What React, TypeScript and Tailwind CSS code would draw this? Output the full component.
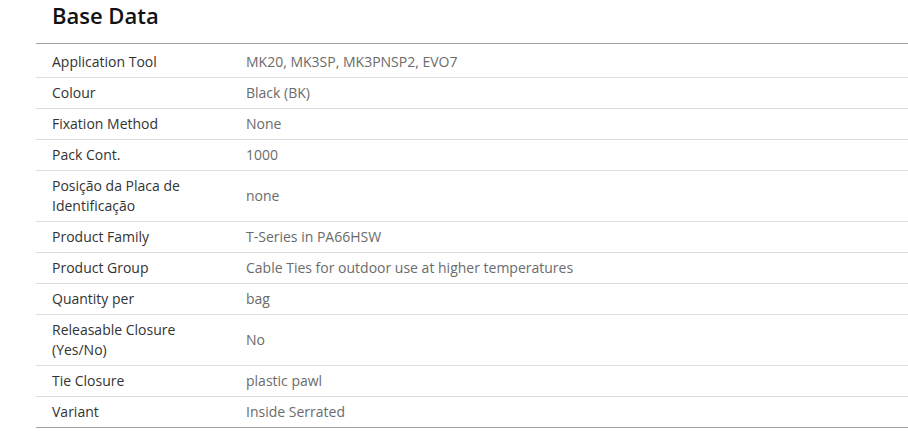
import React from "react";

const rows: [string, string][] = [
    ["Application Tool", "MK20, MK3SP, MK3PNSP2, EVO7"],
    ["Colour", "Black (BK)"],
    ["Fixation Method", "None"],
    ["Pack Cont.", "1000"],
    ["Posição da Placa de Identificação", "none"],
    ["Product Family", "T-Series in PA66HSW"],
    ["Product Group", "Cable Ties for outdoor use at higher temperatures"],
    ["Quantity per", "bag"],
    ["Releasable Closure (Yes/No)", "No"],
    ["Tie Closure", "plastic pawl"],
    ["Variant", "Inside Serrated"],
];

const App = () => {
    return (
        <div
            className="w-[908px] h-[440px] bg-white overflow-hidden"
            style={{ fontFamily: "'Open Sans', 'DejaVu Sans', sans-serif" }}
        >
            {/* Heading */}
            <div className="h-[43px] pl-[52px]">
                <h2 className="text-[22px] leading-[30px] font-semibold text-[#111]">Base Data</h2>
            </div>

            {/* Spec table */}
            <div className="ml-[36px] border-t border-b border-[#a3a3a3] pt-[3px] text-[14px] leading-[20px]">
                {rows.map(([label, value], i) => (
                    <div
                        key={label}
                        className={
                            "grid grid-cols-[210px_1fr] items-center py-[5px] " +
                            (i > 0 ? "border-t border-[#dcdcdc]" : "")
                        }
                    >
                        <div className="pl-4 pr-6 text-[#333]">{label}</div>
                        <div className="text-[#6b6b6b]">{value}</div>
                    </div>
                ))}
            </div>
        </div>
    );
};

export default App;
